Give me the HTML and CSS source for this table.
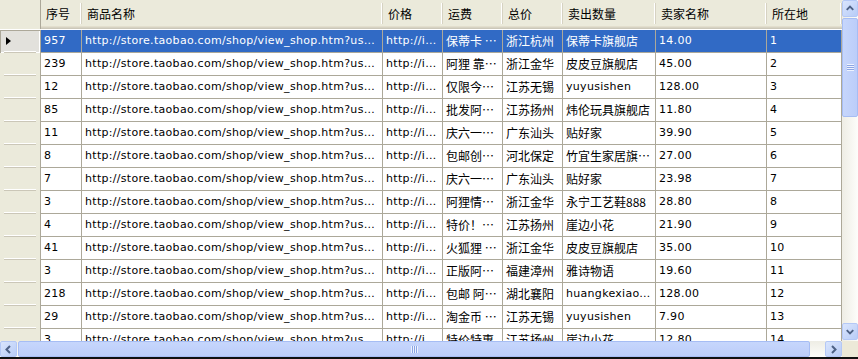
FILE: index.html
```html
<!DOCTYPE html>
<html>
<head>
<meta charset="utf-8">
<link rel="stylesheet" href="styles.css">
</head>
<body>
<div class="frame">
  <div class="main">
    <div class="grid">
      <div class="row head">
        <div class="hc corner"></div>
        <div class="hc">序号</div>
        <div class="hc">商品名称</div>
        <div class="hc">价格</div>
        <div class="hc">运费</div>
        <div class="hc">总价</div>
        <div class="hc">卖出数量</div>
        <div class="hc">卖家名称</div>
        <div class="hc">所在地</div>
      </div>
      <div class="row sel">
        <div class="rh"><span class="arrow"></span></div>
        <div class="c l">957</div><div class="c l">http://store.taobao.com/shop/view_shop.htm?user_number_id=123456</div><div class="c l">http://item.taobao.com</div><div class="c">保蒂卡 儿童</div><div class="c">浙江杭州</div><div class="c">保蒂卡旗舰店</div><div class="c l">14.00</div><div class="c l">1</div>
      </div>
      <div class="row">
        <div class="rh"></div>
        <div class="c l">239</div><div class="c l">http://store.taobao.com/shop/view_shop.htm?user_number_id=123456</div><div class="c l">http://item.taobao.com</div><div class="c">阿狸 靠垫抱枕</div><div class="c">浙江金华</div><div class="c">皮皮豆旗舰店</div><div class="c l">45.00</div><div class="c l">2</div>
      </div>
      <div class="row">
        <div class="rh"></div>
        <div class="c l">12</div><div class="c l">http://store.taobao.com/shop/view_shop.htm?user_number_id=123456</div><div class="c l">http://item.taobao.com</div><div class="c">仅限今日特价</div><div class="c">江苏无锡</div><div class="c l">yuyusishen</div><div class="c l">128.00</div><div class="c l">3</div>
      </div>
      <div class="row">
        <div class="rh"></div>
        <div class="c l">85</div><div class="c l">http://store.taobao.com/shop/view_shop.htm?user_number_id=123456</div><div class="c l">http://item.taobao.com</div><div class="c">批发阿狸公仔</div><div class="c">江苏扬州</div><div class="c">炜伦玩具旗舰店</div><div class="c l">11.80</div><div class="c l">4</div>
      </div>
      <div class="row">
        <div class="rh"></div>
        <div class="c l">11</div><div class="c l">http://store.taobao.com/shop/view_shop.htm?user_number_id=123456</div><div class="c l">http://item.taobao.com</div><div class="c">庆六一特价</div><div class="c">广东汕头</div><div class="c">贴好家</div><div class="c l">39.90</div><div class="c l">5</div>
      </div>
      <div class="row">
        <div class="rh"></div>
        <div class="c l">8</div><div class="c l">http://store.taobao.com/shop/view_shop.htm?user_number_id=123456</div><div class="c l">http://item.taobao.com</div><div class="c">包邮创意礼品</div><div class="c">河北保定</div><div class="c">竹宜生家居旗舰店</div><div class="c l">27.00</div><div class="c l">6</div>
      </div>
      <div class="row">
        <div class="rh"></div>
        <div class="c l">7</div><div class="c l">http://store.taobao.com/shop/view_shop.htm?user_number_id=123456</div><div class="c l">http://item.taobao.com</div><div class="c">庆六一特价</div><div class="c">广东汕头</div><div class="c">贴好家</div><div class="c l">23.98</div><div class="c l">7</div>
      </div>
      <div class="row">
        <div class="rh"></div>
        <div class="c l">3</div><div class="c l">http://store.taobao.com/shop/view_shop.htm?user_number_id=123456</div><div class="c l">http://item.taobao.com</div><div class="c">阿狸情侣鞋</div><div class="c">浙江金华</div><div class="c">永宁工艺鞋888</div><div class="c l">28.80</div><div class="c l">8</div>
      </div>
      <div class="row">
        <div class="rh"></div>
        <div class="c l">4</div><div class="c l">http://store.taobao.com/shop/view_shop.htm?user_number_id=123456</div><div class="c l">http://item.taobao.com</div><div class="c">特价！阿狸</div><div class="c">江苏扬州</div><div class="c">崖边小花</div><div class="c l">21.90</div><div class="c l">9</div>
      </div>
      <div class="row">
        <div class="rh"></div>
        <div class="c l">41</div><div class="c l">http://store.taobao.com/shop/view_shop.htm?user_number_id=123456</div><div class="c l">http://item.taobao.com</div><div class="c">火狐狸 公仔</div><div class="c">浙江金华</div><div class="c">皮皮豆旗舰店</div><div class="c l">35.00</div><div class="c l">10</div>
      </div>
      <div class="row">
        <div class="rh"></div>
        <div class="c l">3</div><div class="c l">http://store.taobao.com/shop/view_shop.htm?user_number_id=123456</div><div class="c l">http://item.taobao.com</div><div class="c">正版阿狸公仔</div><div class="c">福建漳州</div><div class="c">雅诗物语</div><div class="c l">19.60</div><div class="c l">11</div>
      </div>
      <div class="row">
        <div class="rh"></div>
        <div class="c l">218</div><div class="c l">http://store.taobao.com/shop/view_shop.htm?user_number_id=123456</div><div class="c l">http://item.taobao.com</div><div class="c">包邮 阿狸公仔</div><div class="c">湖北襄阳</div><div class="c l">huangkexiaoxiao</div><div class="c l">128.00</div><div class="c l">12</div>
      </div>
      <div class="row">
        <div class="rh"></div>
        <div class="c l">29</div><div class="c l">http://store.taobao.com/shop/view_shop.htm?user_number_id=123456</div><div class="c l">http://item.taobao.com</div><div class="c">淘金币 阿狸</div><div class="c">江苏无锡</div><div class="c l">yuyusishen</div><div class="c l">7.90</div><div class="c l">13</div>
      </div>
      <div class="row">
        <div class="rh"></div>
        <div class="c l">3</div><div class="c l">http://store.taobao.com/shop/view_shop.htm?user_number_id=123456</div><div class="c l">http://item.taobao.com</div><div class="c">特价特惠</div><div class="c">江苏扬州</div><div class="c">崖边小花</div><div class="c l">12.80</div><div class="c l">14</div>
      </div>
    </div>
    <div class="vscroll">
      <div class="btn"><svg width="15" height="15" viewBox="0 0 15 15"><path d="M4 9 L7.5 5.5 L11 9" fill="none" stroke="#4d6185" stroke-width="2"/></svg></div>
      <div class="vthumb"><span class="vgrip"></span></div>
      <div class="vtrack"></div>
      <div class="btn"><svg width="15" height="15" viewBox="0 0 15 15"><path d="M4 6 L7.5 9.5 L11 6" fill="none" stroke="#4d6185" stroke-width="2"/></svg></div>
    </div>
  </div>
  <div class="bottom">
    <div class="hscroll">
      <div class="btn"><svg width="15" height="15" viewBox="0 0 15 15"><path d="M9 4 L5.5 7.5 L9 11" fill="none" stroke="#4d6185" stroke-width="2"/></svg></div>
      <div class="hthumb"><span class="hgrip"></span></div>
      <div class="htrack"></div>
      <div class="btn"><svg width="15" height="15" viewBox="0 0 15 15"><path d="M6 4 L9.5 7.5 L6 11" fill="none" stroke="#4d6185" stroke-width="2"/></svg></div>
    </div>
    <div class="sizebox"></div>
  </div>
  <div class="edge"></div>
</div>
</body>
</html>
```

FILE: styles.css
```css
html, body {
  margin: 0;
  padding: 0;
  background: #ece9d8;
}
.frame {
  width: 858px;
  height: 359px;
  display: flex;
  flex-direction: column;
  font-family: "Noto Sans CJK SC", "DejaVu Sans", sans-serif;
  font-size: 12px;
  color: #000;
  overflow: hidden;
}
.main {
  display: flex;
  height: 341px;
}
.grid {
  width: 842px;
  height: 341px;
  overflow: hidden;
  background: #fff;
}
.row {
  display: grid;
  grid-template-columns: 41px 41px 301px 60px 60px 60px 93px 111px 75px;
  height: 23px;
}
.row.head {
  height: 30px;
  background: linear-gradient(to bottom, #ebeadb 0, #ebeadb 26px, #e2decd 26px, #e2decd 27px, #d6d2c2 27px, #d6d2c2 28px, #cbc7b8 28px, #cbc7b8 29px, #fff 29px);
}
.hc {
  position: relative;
  padding: 0 0 0 5px;
  line-height: 27px;
  white-space: nowrap;
  overflow: hidden;
  height: 29px;
  box-sizing: border-box;
}
.hc::after {
  content: "";
  position: absolute;
  right: 0;
  top: 3px;
  height: 21px;
  width: 1px;
  background: #d6d2c2;
  border-left: 1px solid #fff;
}
.hc.corner {
  background: #ebeadb;
}
.hc.corner::after {
  top: 0;
  height: 29px;
  background: #aca899;
  border-left: none;
}
.c {
  border-right: 1px solid #aca899;
  border-bottom: 1px solid #aca899;
  padding: 0 2px 0 3px;
  line-height: 22px;
  height: 22px;
  white-space: nowrap;
  overflow: hidden;
  text-overflow: ellipsis;
}
.c.l {
  font-family: "DejaVu Sans", "Noto Sans CJK SC", sans-serif;
  font-size: 11px;
  letter-spacing: 0.3px;
}
.rh {
  position: relative;
  background: #ebeadb;
  border-right: 1px solid #aca899;
  height: 23px;
}
.rh::after {
  content: "";
  position: absolute;
  left: 4px;
  right: 4px;
  bottom: 0;
  height: 1px;
  background: #cbc7b8;
  border-top: 1px solid #fff;
}
.sel .c {
  background: #316ac5;
  color: #fff;
}
.sel .rh {
  background: #e2e1dc;
  box-shadow: inset 1px 1px 0 #aca899, inset -1px -1px 0 #fff;
}
.arrow {
  position: absolute;
  left: 6px;
  top: 7px;
  width: 0;
  height: 0;
  border-left: 5px solid #000;
  border-top: 4px solid transparent;
  border-bottom: 4px solid transparent;
}
.vscroll {
  width: 16px;
  height: 341px;
  display: flex;
  flex-direction: column;
  background: linear-gradient(to right, #eeede5, #fdfdfa);
}
.btn {
  width: 15px;
  height: 15px;
  margin: 0 0 1px 0;
  border: 1px solid #b4c8f6;
  border-radius: 2px;
  background: linear-gradient(135deg, #d9e5fd, #b8ccf7);
  box-sizing: content-box;
  flex: none;
  display: flex;
  align-items: center;
  justify-content: center;
}
.vscroll .btn {
  width: 14px;
}
.vthumb {
  height: 97px;
  width: 14px;
  border: 1px solid #a6bdf4;
  border-radius: 2px;
  background: linear-gradient(to right, #c6d6fc, #bccdf9);
  flex: none;
  display: flex;
  align-items: center;
  justify-content: center;
}
.vgrip {
  width: 7px;
  height: 7px;
  background: repeating-linear-gradient(to bottom, #eef3fe 0, #eef3fe 1px, #8ca5e4 1px, #8ca5e4 2px);
}
.vtrack {
  flex: 1;
}
.bottom {
  display: flex;
  height: 16px;
}
.hscroll {
  width: 842px;
  height: 16px;
  display: flex;
  align-items: stretch;
  background: linear-gradient(to bottom, #eeede5, #fdfdfa);
}
.hscroll .btn {
  width: 15px;
  height: 14px;
  margin: 0 1px 0 0;
}
.hscroll .btn:last-child {
  margin: 0;
}
.hthumb {
  width: 790px;
  height: 14px;
  border: 1px solid #a6bdf4;
  border-radius: 2px;
  background: linear-gradient(to bottom, #c6d6fc, #bccdf9);
  display: flex;
  align-items: center;
  justify-content: center;
  flex: none;
}
.hgrip {
  width: 7px;
  height: 7px;
  background: repeating-linear-gradient(to right, #eef3fe 0, #eef3fe 1px, #8ca5e4 1px, #8ca5e4 2px);
}
.htrack {
  flex: 1;
}
.sizebox {
  width: 16px;
  height: 16px;
  background: #ece9d8;
}
.edge {
  height: 2px;
  background: #101010;
}
```
